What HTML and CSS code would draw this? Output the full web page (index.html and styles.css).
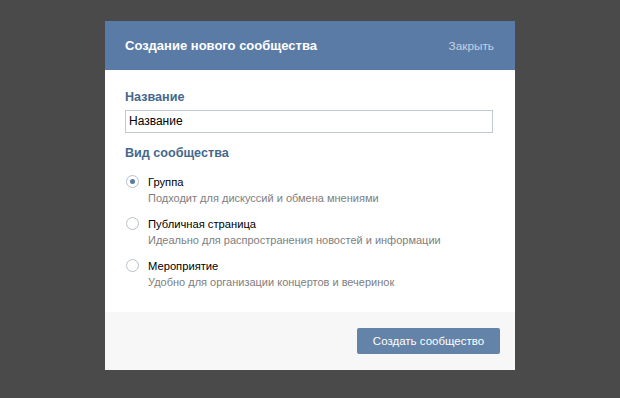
FILE: index.html
```html
<!DOCTYPE html>
<html lang="ru">
<head>
<meta charset="utf-8">
<title>Создание нового сообщества</title>
<link rel="stylesheet" href="styles.css">
</head>
<body>
<div class="dialog">
  <div class="header">
    <div class="title">Создание нового сообщества</div>
    <div class="close">Закрыть</div>
  </div>
  <div class="content">
    <div class="label">Название</div>
    <div class="input">Название</div>
    <div class="label section">Вид сообщества</div>
    <div class="options">
      <div class="option">
        <span class="radio checked"></span>
        <div class="texts">
          <div class="opt-title">Группа</div>
          <div class="opt-desc">Подходит для дискуссий и обмена мнениями</div>
        </div>
      </div>
      <div class="option">
        <span class="radio"></span>
        <div class="texts">
          <div class="opt-title">Публичная страница</div>
          <div class="opt-desc">Идеально для распространения новостей и информации</div>
        </div>
      </div>
      <div class="option">
        <span class="radio"></span>
        <div class="texts">
          <div class="opt-title">Мероприятие</div>
          <div class="opt-desc">Удобно для организации концертов и вечеринок</div>
        </div>
      </div>
    </div>
  </div>
  <div class="footer">
    <div class="button">Создать сообщество</div>
  </div>
</div>
</body>
</html>
```

FILE: styles.css
```css
html, body {
  margin: 0;
  padding: 0;
}
body {
  background: #4a4a4a;
  width: 620px;
  height: 398px;
  overflow: hidden;
  font-family: "Liberation Sans", Arial, sans-serif;
  font-size: 12px;
}
.dialog {
  margin: 21px 0 0 105px;
  width: 410px;
  background: #ffffff;
}
.header {
  height: 49px;
  background: #5a7ba6;
  display: flex;
  align-items: center;
  justify-content: space-between;
  padding: 0 21px 0 20px;
}
.title {
  color: #ffffff;
  font-weight: bold;
  font-size: 13px;
}
.close {
  color: #c5d2e1;
  font-size: 11.8px;
}
.content {
  padding: 19px 22px 22px 20px;
}
.label {
  color: #45688e;
  font-weight: bold;
  font-size: 12.6px;
  line-height: 16px;
}
.label.section {
  margin-top: 12px;
}
.input {
  margin-top: 5px;
  height: 21px;
  border: 1px solid #c0cad5;
  padding-left: 3px;
  line-height: 21px;
  font-size: 12px;
  color: #000;
}
.options {
  margin-top: 13px;
  display: flex;
  flex-direction: column;
  gap: 10px;
}
.option {
  display: flex;
  align-items: flex-start;
}
.radio {
  box-sizing: border-box;
  width: 13px;
  height: 13px;
  border: 1px solid #b6c1cd;
  border-radius: 50%;
  margin: 1px 9px 0 1px;
  display: flex;
  align-items: center;
  justify-content: center;
  flex: none;
}
.radio.checked::after {
  content: "";
  width: 5px;
  height: 5px;
  border-radius: 50%;
  background: #5b7aa3;
}
.opt-title {
  line-height: 16px;
  font-size: 11.2px;
  color: #000;
}
.opt-desc {
  line-height: 16px;
  font-size: 11px;
  color: #7e7e7e;
}
.footer {
  background: #f7f7f7;
  height: 58px;
  display: flex;
  align-items: center;
  justify-content: flex-end;
  padding: 0 15px;
}
.button {
  width: 143px;
  height: 26px;
  background: #6383a8;
  border-radius: 2px;
  color: #fff;
  font-size: 11.5px;
  line-height: 26px;
  text-align: center;
}
```
